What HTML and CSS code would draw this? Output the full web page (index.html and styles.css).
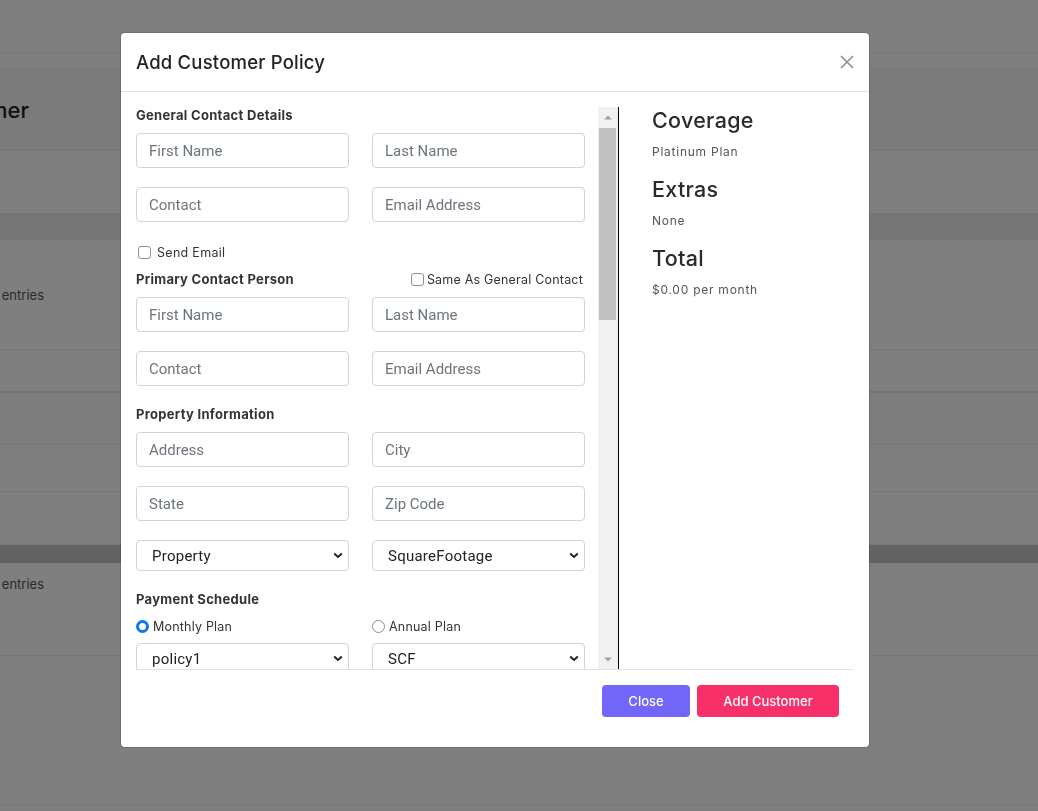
FILE: index.html
```html
<!DOCTYPE html>
<html lang="en">
<head>
<meta charset="utf-8">
<title>Add Customer Policy</title>
<link rel="stylesheet" href="styles.css">
</head>
<body>
<div class="page">
  <div class="topbar"></div>
  <div class="crumb"></div>
  <section class="page-head"><div class="clip"><h1 class="page-title">Customer</h1></div></section>
  <div class="toolbar"></div>
  <div class="band"></div>
  <div class="card-top"><div class="clip clip-sm"><span>Show 10 entries</span></div></div>
  <div class="trow trow-a"></div>
  <div class="trow trow-head"></div>
  <div class="trow trow-b"></div>
  <div class="trow trow-c"></div>
  <div class="hscroll"></div>
  <div class="card-bottom"><div class="clip clip-sm"><span>Showing 0 to 0 of 0 entries</span></div></div>
  <div class="rest"></div>
</div>

<div class="backdrop"></div>

<div class="modal">
  <div class="modal-header">
    <h2 class="modal-title">Add Customer Policy</h2>
    <button class="close" type="button" aria-label="Close">
      <svg width="16" height="16" viewBox="0 0 16 16"><path d="M2 2 L14 14 M14 2 L2 14" stroke="#8a8a8a" stroke-width="1.5" fill="none"/></svg>
    </button>
  </div>
  <div class="modal-body">
    <div class="pane-wrap">
      <div class="form-pane">
        <h4 class="section-title first">General Contact Details</h4>
        <div class="row">
          <input type="text" placeholder="First Name">
          <input type="text" placeholder="Last Name">
        </div>
        <div class="row">
          <input type="text" placeholder="Contact">
          <input type="text" placeholder="Email Address">
        </div>
        <label class="check-line"><input class="cb" type="checkbox"><span>Send Email</span></label>

        <div class="section-head">
          <h4 class="section-title">Primary Contact Person</h4>
          <label class="check-inline"><input class="cb" type="checkbox"><span>Same As General Contact</span></label>
        </div>
        <div class="row">
          <input type="text" placeholder="First Name">
          <input type="text" placeholder="Last Name">
        </div>
        <div class="row">
          <input type="text" placeholder="Contact">
          <input type="text" placeholder="Email Address">
        </div>

        <h4 class="section-title">Property Information</h4>
        <div class="row">
          <input type="text" placeholder="Address">
          <input type="text" placeholder="City">
        </div>
        <div class="row">
          <input type="text" placeholder="State">
          <input type="text" placeholder="Zip Code">
        </div>
        <div class="row">
          <div class="select-wrap">
            <select><option>Property</option></select>
            <svg class="chev" width="10" height="7" viewBox="0 0 10 7"><path d="M1.2 1.5 L5 5 L8.8 1.5" stroke="#222" stroke-width="2" fill="none"/></svg>
          </div>
          <div class="select-wrap">
            <select><option>SquareFootage</option></select>
            <svg class="chev" width="10" height="7" viewBox="0 0 10 7"><path d="M1.2 1.5 L5 5 L8.8 1.5" stroke="#222" stroke-width="2" fill="none"/></svg>
          </div>
        </div>

        <h4 class="section-title">Payment Schedule</h4>
        <div class="radio-row">
          <label class="radio"><input class="rb" type="radio" name="plan" checked><span>Monthly Plan</span></label>
          <label class="radio"><input class="rb" type="radio" name="plan"><span>Annual Plan</span></label>
        </div>
        <div class="row last-row">
          <div class="select-wrap">
            <select><option>policy1</option></select>
            <svg class="chev" width="10" height="7" viewBox="0 0 10 7"><path d="M1.2 1.5 L5 5 L8.8 1.5" stroke="#222" stroke-width="2" fill="none"/></svg>
          </div>
          <div class="select-wrap">
            <select><option>SCF</option></select>
            <svg class="chev" width="10" height="7" viewBox="0 0 10 7"><path d="M1.2 1.5 L5 5 L8.8 1.5" stroke="#222" stroke-width="2" fill="none"/></svg>
          </div>
        </div>
      </div>
      <div class="scrollbar" aria-hidden="true">
        <div class="sb-btn"><svg width="8" height="5" viewBox="0 0 8 5"><path d="M0 4.5 L4 0.5 L8 4.5 Z" fill="#a3a3a3"/></svg></div>
        <div class="sb-track"><div class="sb-thumb"></div></div>
        <div class="sb-btn"><svg width="8" height="5" viewBox="0 0 8 5"><path d="M0 0.5 L4 4.5 L8 0.5 Z" fill="#a3a3a3"/></svg></div>
      </div>
    </div>
    <div class="summary">
      <h3 class="sum-title">Coverage</h3>
      <p class="sum-text">Platinum Plan</p>
      <h3 class="sum-title">Extras</h3>
      <p class="sum-text">None</p>
      <h3 class="sum-title">Total</h3>
      <p class="sum-text">$0.00 per month</p>
    </div>
  </div>
  <div class="modal-footer">
    <button class="btn btn-close" type="button">Close</button>
    <button class="btn btn-add" type="button">Add Customer</button>
  </div>
</div>
</body>
</html>
```

FILE: styles.css
```css
* { box-sizing: border-box; }

html, body { margin: 0; padding: 0; }

body {
  font-family: Inter, Roboto, "Noto Sans", sans-serif;
  background: #fff;
  color: #222;
  width: 1038px;
  height: 811px;
  overflow: hidden;
}

/* ---------- background page ---------- */
.page { height: 811px; overflow: hidden; }
.topbar { height: 53px; border-bottom: 1px solid #f1f1f1; }
.crumb { height: 16px; background: #fcfcfc; border-bottom: 1px solid #f3f3f3; }
.page-head {
  height: 82px;
  background: #f7f7f7;
  border-bottom: 1px solid #ececec;
  display: flex;
  align-items: center;
}
.clip {
  width: 29px;
  overflow: hidden;
  display: flex;
  justify-content: flex-end;
  white-space: nowrap;
}
.clip-sm { width: 44px; }
.page-title { margin: 0; font-size: 22px; font-weight: 500; color: #222; line-height: 28px; }
.toolbar { height: 62px; }
.band { height: 27px; background: #ececec; }
.card-top {
  height: 110px;
  display: flex;
  align-items: center;
  font-size: 13px;
  color: #555;
  border-bottom: 1px solid #eaeaea;
}
.trow { border-bottom: 1px solid #eeeeee; }
.trow-a { height: 43px; border-bottom: 2px solid #e4e4f0; }
.trow-head { height: 52px; background: #fbfbfb; }
.trow-b { height: 47px; }
.trow-c { height: 53px; }
.hscroll { height: 18px; background: #c6c6c6; }
.card-bottom {
  height: 93px;
  display: flex;
  align-items: flex-start;
  padding-top: 13px;
  font-size: 13px;
  color: #555;
  border-bottom: 1px solid #ececec;
}
.rest { height: 150px; background: #fefefe; border-bottom: 2px solid #f6f6f6; }

.backdrop {
  position: fixed;
  inset: 0;
  background: rgba(0, 0, 0, 0.5);
}

/* ---------- modal ---------- */
.modal {
  position: fixed;
  left: 121px;
  top: 33px;
  width: 748px;
  height: 714px;
  background: #fff;
  border-radius: 4px;
  box-shadow: 0 0 0 1px rgba(0, 0, 0, 0.12);
  display: flex;
  flex-direction: column;
}

.modal-header {
  height: 59px;
  flex: none;
  border-bottom: 1px solid #dee2e6;
  display: flex;
  align-items: center;
  justify-content: space-between;
  padding: 0 14px 0 15px;
}
.modal-title {
  margin: 0;
  font-size: 18.5px;
  font-weight: 500;
  color: #222;
  letter-spacing: 0.2px;
}
.close {
  border: 0;
  background: none;
  padding: 0;
  width: 16px;
  height: 16px;
  display: flex;
}

.modal-body {
  height: 577px;
  flex: none;
  padding-top: 15px;
  display: flex;
}

.pane-wrap {
  width: 498px;
  height: 562px;
  flex: none;
  display: flex;
  border-right: 1px solid #000;
}
.form-pane {
  width: 477px;
  height: 562px;
  overflow: hidden;
  padding: 0 13px 0 15px;
  display: flex;
  flex-direction: column;
}
.form-pane > * { flex: none; }

.scrollbar {
  width: 20px;
  height: 562px;
  background: #f1f1f1;
  display: flex;
  flex-direction: column;
}
.sb-btn {
  height: 20px;
  flex: none;
  display: flex;
  align-items: center;
  justify-content: center;
}
.sb-track {
  flex: 1;
  padding: 1px 2px 0 1px;
}
.sb-thumb {
  height: 192px;
  background: #c1c1c1;
}

.section-title {
  margin: 0 0 9px;
  padding-top: 1px;
  font-size: 13px;
  font-weight: 700;
  line-height: 17px;
  color: #333;
  letter-spacing: 0.3px;
}
.section-title.first { margin-top: -1px; }

.section-head {
  display: flex;
  justify-content: space-between;
  align-items: flex-start;
  margin-bottom: 9px;
}
.section-head .section-title { margin: 0; }

.row {
  display: grid;
  grid-template-columns: 213px 213px;
  column-gap: 23px;
  margin-bottom: 19px;
}
.last-row { margin-bottom: 0; }

input[type="text"] {
  height: 35px;
  width: 100%;
  border: 1px solid #ced4da;
  border-radius: 4px;
  padding: 0 12px;
  font-family: Roboto, "Noto Sans", sans-serif;
  font-size: 15px;
  color: #222;
  background: #fff;
  outline: none;
}
input[type="text"]::placeholder { color: #6c757d; }

.check-line {
  display: flex;
  align-items: center;
  height: 16px;
  margin: 3px 0 10px 2px;
  font-size: 12.5px;
  letter-spacing: 0.3px;
  color: #333;
}
.check-line .cb { margin-right: 6px; }
.check-inline {
  display: flex;
  align-items: center;
  height: 18px;
  margin-right: 2px;
  font-size: 12.5px;
  letter-spacing: 0.2px;
  color: #333;
}
.check-inline .cb { margin-right: 3px; }

.cb {
  appearance: none;
  -webkit-appearance: none;
  width: 13px;
  height: 13px;
  margin: 0;
  border: 1px solid #8f8f8f;
  border-radius: 3px;
  background: #fff;
  flex: none;
}

.radio-row {
  display: grid;
  grid-template-columns: 213px 213px;
  column-gap: 23px;
  height: 16px;
  margin: 1px 0 9px;
}
.radio {
  display: flex;
  align-items: center;
  font-size: 12.5px;
  letter-spacing: 0.2px;
  color: #333;
}
.rb {
  appearance: none;
  -webkit-appearance: none;
  width: 13px;
  height: 13px;
  margin: 0 4px 0 0;
  border-radius: 50%;
  border: 1px solid #8f8f8f;
  background: #fff;
  flex: none;
}
.rb:checked { border: 3.5px solid #0b75f5; }

.select-wrap { position: relative; }
.select-wrap select {
  appearance: none;
  -webkit-appearance: none;
  width: 100%;
  height: 31px;
  border: 1px solid #ced4da;
  border-radius: 4px;
  padding: 0 15px;
  font-family: Roboto, "Noto Sans", sans-serif;
  font-size: 15px;
  letter-spacing: 0.25px;
  color: #222;
  background: #fff;
  outline: none;
}
.chev {
  position: absolute;
  right: 6px;
  top: 12px;
  pointer-events: none;
}

.summary { padding-left: 33px; }
.sum-title {
  margin: 0 0 9px;
  font-size: 21.5px;
  font-weight: 500;
  line-height: 27px;
  letter-spacing: 0.3px;
  color: #2a2a2a;
}
.sum-text {
  margin: 0 0 15px;
  font-size: 12px;
  line-height: 18px;
  letter-spacing: 0.75px;
  color: #555;
}

.modal-footer {
  flex: none;
  margin: 0 16px 0 15px;
  border-top: 1px solid #dee2e6;
  padding: 15px 14px 0 0;
  display: flex;
  justify-content: flex-end;
  gap: 7px;
}
.btn {
  height: 32px;
  border: 0;
  border-radius: 4px;
  font-family: inherit;
  font-size: 13px;
  font-weight: 500;
  color: #fff;
  padding: 0;
}
.btn-close { width: 88px; background: #7166f9; }
.btn-add { width: 142px; background: #f8306a; }
```
